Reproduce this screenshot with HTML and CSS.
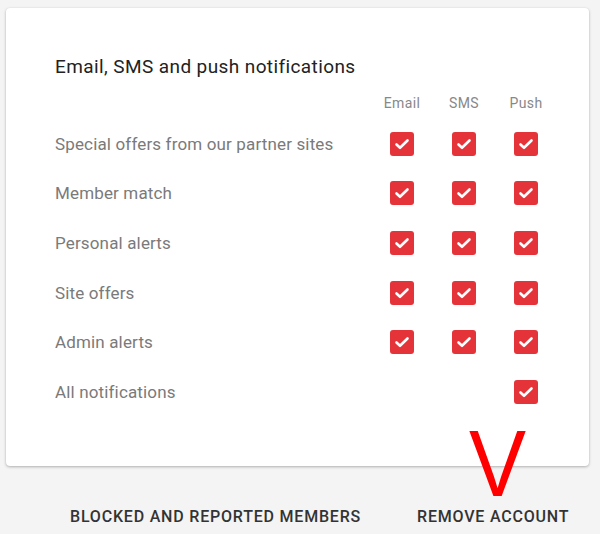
FILE: index.html
```html
<!DOCTYPE html>
<html>
<head>
<meta charset="utf-8">
<link rel="stylesheet" href="styles.css">
</head>
<body>
<div class="page">
  <div class="card">
    <h2 class="title">Email, SMS and push notifications</h2>
    <div class="grid">
      <div class="label"></div>
      <div class="head">Email</div>
      <div class="head">SMS</div>
      <div class="head">Push</div>

      <div class="label">Special offers from our partner sites</div>
      <div class="cell"><span class="cb"><svg viewBox="0 0 24 24"><path d="M6.5 12.5l3.5 3.3 7.5-7.3"/></svg></span></div>
      <div class="cell"><span class="cb"><svg viewBox="0 0 24 24"><path d="M6.5 12.5l3.5 3.3 7.5-7.3"/></svg></span></div>
      <div class="cell"><span class="cb"><svg viewBox="0 0 24 24"><path d="M6.5 12.5l3.5 3.3 7.5-7.3"/></svg></span></div>

      <div class="label">Member match</div>
      <div class="cell"><span class="cb"><svg viewBox="0 0 24 24"><path d="M6.5 12.5l3.5 3.3 7.5-7.3"/></svg></span></div>
      <div class="cell"><span class="cb"><svg viewBox="0 0 24 24"><path d="M6.5 12.5l3.5 3.3 7.5-7.3"/></svg></span></div>
      <div class="cell"><span class="cb"><svg viewBox="0 0 24 24"><path d="M6.5 12.5l3.5 3.3 7.5-7.3"/></svg></span></div>

      <div class="label">Personal alerts</div>
      <div class="cell"><span class="cb"><svg viewBox="0 0 24 24"><path d="M6.5 12.5l3.5 3.3 7.5-7.3"/></svg></span></div>
      <div class="cell"><span class="cb"><svg viewBox="0 0 24 24"><path d="M6.5 12.5l3.5 3.3 7.5-7.3"/></svg></span></div>
      <div class="cell"><span class="cb"><svg viewBox="0 0 24 24"><path d="M6.5 12.5l3.5 3.3 7.5-7.3"/></svg></span></div>

      <div class="label">Site offers</div>
      <div class="cell"><span class="cb"><svg viewBox="0 0 24 24"><path d="M6.5 12.5l3.5 3.3 7.5-7.3"/></svg></span></div>
      <div class="cell"><span class="cb"><svg viewBox="0 0 24 24"><path d="M6.5 12.5l3.5 3.3 7.5-7.3"/></svg></span></div>
      <div class="cell"><span class="cb"><svg viewBox="0 0 24 24"><path d="M6.5 12.5l3.5 3.3 7.5-7.3"/></svg></span></div>

      <div class="label">Admin alerts</div>
      <div class="cell"><span class="cb"><svg viewBox="0 0 24 24"><path d="M6.5 12.5l3.5 3.3 7.5-7.3"/></svg></span></div>
      <div class="cell"><span class="cb"><svg viewBox="0 0 24 24"><path d="M6.5 12.5l3.5 3.3 7.5-7.3"/></svg></span></div>
      <div class="cell"><span class="cb"><svg viewBox="0 0 24 24"><path d="M6.5 12.5l3.5 3.3 7.5-7.3"/></svg></span></div>

      <div class="label">All notifications</div>
      <div class="cell"></div>
      <div class="cell"></div>
      <div class="cell"><span class="cb"><svg viewBox="0 0 24 24"><path d="M6.5 12.5l3.5 3.3 7.5-7.3"/></svg></span></div>
    </div>
  </div>
  <div class="links">
    <a class="link">BLOCKED AND REPORTED MEMBERS</a>
    <a class="link">REMOVE ACCOUNT</a>
  </div>
  <span class="mark">V</span>
</div>
</body>
</html>
```
FILE: styles.css
```css
* { box-sizing: border-box; }
html, body { margin: 0; padding: 0; }
body {
  background: #f4f4f4;
  font-family: Roboto, "Liberation Sans", Arial, sans-serif;
  width: 600px;
  height: 534px;
  overflow: hidden;
}
.page {
  position: relative;
  padding: 8px 11px 0 6px;
}
.card {
  background: #fff;
  border-radius: 4px;
  box-shadow: 0 1px 3px rgba(0,0,0,0.28), 0 0 1px rgba(0,0,0,0.08);
  height: 458px;
  padding: 48px 32px 0 49px;
}
.title {
  margin: 0;
  font-size: 19px;
  letter-spacing: 0.4px;
  font-weight: 400;
  color: #222;
  line-height: 22px;
}
.grid {
  display: grid;
  grid-template-columns: 1fr 62px 62px 62px;
  grid-template-rows: 26px repeat(6, 49.6px);
  margin-top: 15px;
  align-items: center;
}
.head {
  font-size: 14px;
  letter-spacing: 0.4px;
  color: #888;
  text-align: center;
  line-height: 20px;
  align-self: start;
}
.label {
  font-size: 17px;
  letter-spacing: 0.15px;
  color: #7a7a7a;
  line-height: 20px;
}
.cell {
  display: flex;
  justify-content: center;
  align-items: center;
}
.cb {
  width: 24px;
  height: 24px;
  border-radius: 3px;
  background: #e5333a;
  display: flex;
  align-items: center;
  justify-content: center;
}
.cb svg {
  width: 24px;
  height: 24px;
  fill: none;
  stroke: #fff;
  stroke-width: 2.6;
  stroke-linecap: round;
  stroke-linejoin: round;
}
.links {
  display: flex;
  gap: 56px;
  padding-left: 64px;
  margin-top: 42px;
}
.link {
  font-size: 16px;
  letter-spacing: 0.8px;
  font-weight: 500;
  color: #333;
  line-height: 18px;
}
.mark {
  position: absolute;
  left: 469px;
  top: 422.5px;
  font-family: "Liberation Sans", Arial, sans-serif;
  font-size: 95px;
  line-height: 0.86;
  color: #ff0000;
  transform: scaleX(0.9);
  transform-origin: left top;
}
```
